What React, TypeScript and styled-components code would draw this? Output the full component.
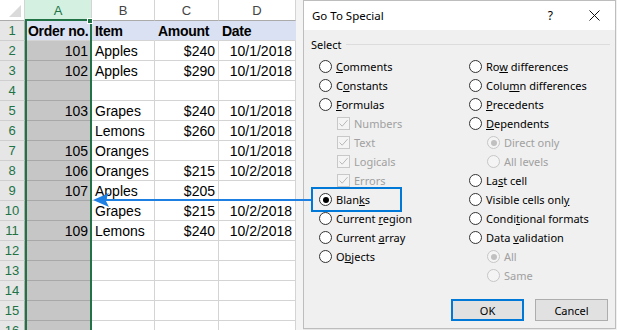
import React from 'react';
import styled, { createGlobalStyle, css } from 'styled-components';

const GlobalStyle = createGlobalStyle`
  html, body {
    margin: 0;
    padding: 0;
    background: #f3f3f3;
    overflow: hidden;
  }
  * {
    box-sizing: border-box;
  }
`;

const Screen = styled.div`
  position: relative;
  display: flex;
  width: 617px;
  height: 330px;
  overflow: hidden;
  background: #f3f3f3;
`;

/* ---------- worksheet ---------- */

const Sheet = styled.div`
  position: relative;
  flex: 0 0 303px;
  height: 330px;
  overflow: hidden;
  background: #f4f4f4;
`;

const Grid = styled.div`
  display: grid;
  grid-template-columns: 25px 67px 63px 64px 77px;
  grid-template-rows: 21px;
  grid-auto-rows: 20px;
  width: 296px;
  background: #fff;
  font-family: 'Liberation Sans', Arial, sans-serif;
  font-size: 14px;
  color: #000;
`;

const Corner = styled.div`
  display: flex;
  align-items: flex-end;
  justify-content: flex-end;
  padding: 0 3px 3px 0;
  background: #fff;
  border-right: 1px solid #d4d4d4;
  border-bottom: 1px solid #ababab;
`;

const ColHead = styled.div<{ $active?: boolean }>`
  display: flex;
  align-items: center;
  justify-content: center;
  font-size: 13px;
  color: ${({ $active }) => ($active ? '#217346' : '#444')};
  background: ${({ $active }) => ($active ? '#d3f0e0' : '#fff')};
  border-right: 1px solid #d4d4d4;
  border-bottom: 1px solid #ababab;
`;

const RowHead = styled.div`
  display: flex;
  align-items: center;
  justify-content: center;
  font-size: 13px;
  color: #217346;
  background: #e6e6e6;
  border-right: 1px solid #ababab;
  border-bottom: 1px solid #cfcfcf;
`;

type Tone = 'plain' | 'title' | 'picked';

const toneStyles = {
  plain: css`
    background: #fff;
    border-right: 1px solid #d4d4d4;
    border-bottom: 1px solid #d4d4d4;
  `,
  title: css`
    background: #d9e1f2;
    border-right: 1px solid #d9e1f2;
    border-bottom: 1px solid #d4d4d4;
  `,
  picked: css`
    background: #c6c6c6;
    border-right: 1px solid #c6c6c6;
    border-bottom: 1px solid #a8a8a8;
  `,
};

const Cell = styled.div<{ $tone: Tone; $right?: boolean; $bold?: boolean }>`
  display: flex;
  align-items: center;
  justify-content: ${({ $right }) => ($right ? 'flex-end' : 'flex-start')};
  padding: 0 3px;
  white-space: nowrap;
  font-weight: ${({ $bold }) => ($bold ? 700 : 400)};
  letter-spacing: ${({ $bold }) => ($bold ? '-0.3px' : '0')};
  ${({ $tone }) => toneStyles[$tone]}
`;

const SelectionFrame = styled.div`
  position: absolute;
  left: 25px;
  top: 19px;
  width: 67px;
  height: 320px;
  border: 2px solid #217346;
  pointer-events: none;

  &::after {
    content: '';
    position: absolute;
    right: -3px;
    top: -3px;
    width: 4px;
    height: 4px;
    background: #217346;
    border: 1px solid #fff;
  }
`;

/* ---------- dialog ---------- */

const Dialog = styled.div`
  flex: 0 0 313px;
  height: 329px;
  display: flex;
  flex-direction: column;
  background: #f0f0f0;
  border: 1px solid #bdbdbd;
  box-shadow: -3px 0 6px rgba(0, 0, 0, 0.1);
  font-family: 'Noto Sans', 'Segoe UI', sans-serif;
  font-size: 11px;
  color: #000;
`;

const TitleBar = styled.div`
  display: flex;
  align-items: center;
  height: 29px;
  padding: 0 15px 0 8px;
  background: #fff;
`;

const Title = styled.span`
  font-size: 11.5px;
`;

const HelpMark = styled.span`
  margin-left: auto;
  margin-right: 36px;
  font-size: 12px;
`;

const Body = styled.div`
  display: flex;
  flex-direction: column;
  padding: 7px 5px 0 0;
`;

const GroupHeading = styled.div`
  display: flex;
  align-items: center;
  height: 14px;
  padding-left: 7px;
`;

const Rule = styled.div`
  flex: 1;
  height: 1px;
  margin-left: 4px;
  background: #dcdcdc;
`;

const Options = styled.div`
  display: grid;
  grid-template-columns: 150px 1fr;
  margin-top: 6px;
  padding-left: 15px;
`;

const OptionColumn = styled.div`
  display: flex;
  flex-direction: column;
`;

const OptionRow = styled.div<{ $indent?: boolean; $disabled?: boolean; $focused?: boolean }>`
  position: relative;
  display: flex;
  align-items: center;
  gap: 4px;
  height: 19px;
  padding-left: ${({ $indent }) => ($indent ? '18px' : '0')};
  color: ${({ $disabled }) => ($disabled ? '#a0a0a0' : '#000')};
  white-space: nowrap;

  ${({ $focused }) =>
    $focused &&
    css`
      &::before {
        content: '';
        position: absolute;
        left: -8px;
        top: -3px;
        width: 87px;
        height: 21px;
        border: 2px solid #0078d7;
      }
    `}
`;

const Radio = styled.span<{ $checked?: boolean; $disabled?: boolean }>`
  display: flex;
  align-items: center;
  justify-content: center;
  flex: 0 0 13px;
  width: 13px;
  height: 13px;
  border-radius: 50%;
  border: 1px solid ${({ $disabled }) => ($disabled ? '#c6c6c6' : '#333')};
  background: ${({ $disabled }) => ($disabled ? '#f4f4f4' : '#fff')};

  &::after {
    content: '';
    display: ${({ $checked }) => ($checked ? 'block' : 'none')};
    width: 6px;
    height: 6px;
    border-radius: 50%;
    background: ${({ $disabled }) => ($disabled ? '#c0c0c0' : '#000')};
  }
`;

const CheckBox = styled.span`
  display: flex;
  align-items: center;
  justify-content: center;
  flex: 0 0 13px;
  width: 13px;
  height: 13px;
  border: 1px solid #c8c8c8;
  background: #f4f4f4;
`;

const AccessKey = styled.u`
  text-decoration: underline;
  text-underline-offset: 1px;
`;

const ButtonRow = styled.div`
  display: flex;
  justify-content: flex-end;
  gap: 11px;
  margin-top: 14px;
  padding-right: 2px;
`;

const Button = styled.button<{ $primary?: boolean }>`
  width: 73px;
  height: 22px;
  padding: 0;
  font: inherit;
  color: #000;
  background: #e1e1e1;
  border: ${({ $primary }) => ($primary ? '2px solid #0078d7' : '1px solid #adadad')};
`;

const ArrowLayer = styled.svg`
  position: absolute;
  left: 0;
  top: 0;
  width: 617px;
  height: 330px;
  pointer-events: none;
`;

/* ---------- data ---------- */

const sheetRows: string[][] = [
  ['Order no.', 'Item', 'Amount', 'Date'],
  ['101', 'Apples', '$240', '10/1/2018'],
  ['102', 'Apples', '$290', '10/1/2018'],
  ['', '', '', ''],
  ['103', 'Grapes', '$240', '10/1/2018'],
  ['', 'Lemons', '$260', '10/1/2018'],
  ['105', 'Oranges', '', '10/1/2018'],
  ['106', 'Oranges', '$215', '10/2/2018'],
  ['107', 'Apples', '$205', ''],
  ['', 'Grapes', '$215', '10/2/2018'],
  ['109', 'Lemons', '$240', '10/2/2018'],
  ['', '', '', ''],
  ['', '', '', ''],
  ['', '', '', ''],
  ['', '', '', ''],
  ['', '', '', ''],
];

type Choice = {
  text: string;
  key?: number;
  kind: 'radio' | 'check';
  indent?: boolean;
  disabled?: boolean;
  checked?: boolean;
  focused?: boolean;
};

const leftChoices: Choice[] = [
  { text: 'Comments', key: 0, kind: 'radio' },
  { text: 'Constants', key: 1, kind: 'radio' },
  { text: 'Formulas', key: 0, kind: 'radio' },
  { text: 'Numbers', kind: 'check', indent: true, disabled: true },
  { text: 'Text', kind: 'check', indent: true, disabled: true },
  { text: 'Logicals', kind: 'check', indent: true, disabled: true },
  { text: 'Errors', kind: 'check', indent: true, disabled: true },
  { text: 'Blanks', key: 4, kind: 'radio', checked: true, focused: true },
  { text: 'Current region', key: 8, kind: 'radio' },
  { text: 'Current array', key: 8, kind: 'radio' },
  { text: 'Objects', key: 1, kind: 'radio' },
];

const rightChoices: Choice[] = [
  { text: 'Row differences', key: 2, kind: 'radio' },
  { text: 'Column differences', key: 4, kind: 'radio' },
  { text: 'Precedents', key: 0, kind: 'radio' },
  { text: 'Dependents', key: 0, kind: 'radio' },
  { text: 'Direct only', kind: 'radio', indent: true, disabled: true, checked: true },
  { text: 'All levels', kind: 'radio', indent: true, disabled: true },
  { text: 'Last cell', key: 2, kind: 'radio' },
  { text: 'Visible cells only', key: 17, kind: 'radio' },
  { text: 'Conditional formats', key: 5, kind: 'radio' },
  { text: 'Data validation', key: 5, kind: 'radio' },
  { text: 'All', kind: 'radio', indent: true, disabled: true, checked: true },
  { text: 'Same', kind: 'radio', indent: true, disabled: true },
];

const Label = ({ text, at }: { text: string; at?: number }) =>
  at === undefined ? (
    <span>{text}</span>
  ) : (
    <span>
      {text.slice(0, at)}
      <AccessKey>{text[at]}</AccessKey>
      {text.slice(at + 1)}
    </span>
  );

const ChoiceRow = ({ choice }: { choice: Choice }) => (
  <OptionRow $indent={choice.indent} $disabled={choice.disabled} $focused={choice.focused}>
    {choice.kind === 'radio' ? (
      <Radio $checked={choice.checked} $disabled={choice.disabled} />
    ) : (
      <CheckBox>
        <svg width="11" height="11" viewBox="0 0 11 11">
          <path d="M1.5 5.5 L4.2 8.2 L9.5 2.2" fill="none" stroke="#b8b8b8" strokeWidth="1" />
        </svg>
      </CheckBox>
    )}
    <Label text={choice.text} at={choice.key} />
  </OptionRow>
);

const Worksheet = () => (
  <Sheet>
    <Grid>
      <Corner>
        <svg width="12" height="12" viewBox="0 0 12 12">
          <path d="M12 0 L12 12 L0 12 Z" fill="#dadada" />
        </svg>
      </Corner>
      <ColHead $active>A</ColHead>
      <ColHead>B</ColHead>
      <ColHead>C</ColHead>
      <ColHead>D</ColHead>
      {sheetRows.map((row, i) => (
        <React.Fragment key={i}>
          <RowHead>{i + 1}</RowHead>
          {row.map((value, c) => {
            const isTitle = i === 0;
            const tone: Tone = isTitle ? 'title' : c === 0 ? 'picked' : 'plain';
            const right = !isTitle && (c === 0 || c === 2 || c === 3);
            return (
              <Cell key={c} $tone={tone} $right={right} $bold={isTitle}>
                {value}
              </Cell>
            );
          })}
        </React.Fragment>
      ))}
    </Grid>
    <SelectionFrame />
  </Sheet>
);

const GoToSpecial = () => (
  <Dialog>
    <TitleBar>
      <Title>Go To Special</Title>
      <HelpMark>?</HelpMark>
      <svg width="11" height="11" viewBox="0 0 11 11">
        <path d="M0.5 0.5 L10.5 10.5 M10.5 0.5 L0.5 10.5" stroke="#111" strokeWidth="1" />
      </svg>
    </TitleBar>
    <Body>
      <GroupHeading>
        <span>Select</span>
        <Rule />
      </GroupHeading>
      <Options>
        <OptionColumn>
          {leftChoices.map((c) => (
            <ChoiceRow key={c.text} choice={c} />
          ))}
        </OptionColumn>
        <OptionColumn>
          {rightChoices.map((c) => (
            <ChoiceRow key={c.text} choice={c} />
          ))}
        </OptionColumn>
      </Options>
      <ButtonRow>
        <Button $primary>OK</Button>
        <Button>Cancel</Button>
      </ButtonRow>
    </Body>
  </Dialog>
);

const App = () => (
  <>
    <GlobalStyle />
    <Screen>
      <Worksheet />
      <GoToSpecial />
      <ArrowLayer viewBox="0 0 617 330">
        <line x1="104" y1="200" x2="311" y2="200" stroke="#1e7fe3" strokeWidth="2" />
        <path d="M93 200 L109 193 L105.5 200 L109 207 Z" fill="#1e7fe3" />
      </ArrowLayer>
    </Screen>
  </>
);

export default App;
